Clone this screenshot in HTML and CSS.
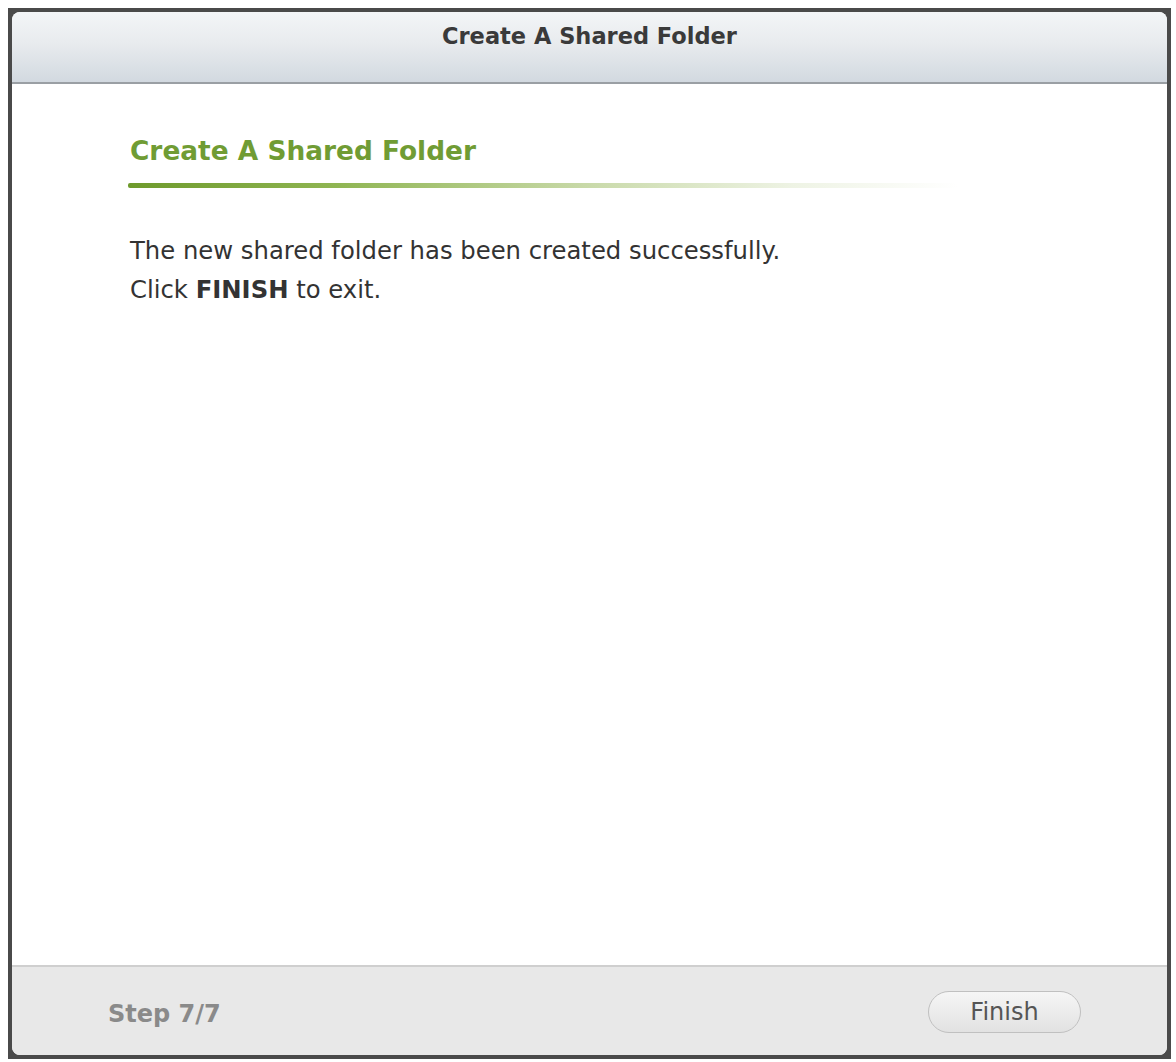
FILE: index.html
```html
<!DOCTYPE html>
<html>
<head>
<meta charset="utf-8">
<link rel="stylesheet" href="styles.css">
</head>
<body>
<div class="window">
  <div class="inner">
    <div class="titlebar">Create A Shared Folder</div>
    <div class="content">
      <h1 class="heading">Create A Shared Folder</h1>
      <div class="rule"></div>
      <p class="msg">The new shared folder has been created successfully.</p>
      <p class="msg">Click <b>FINISH</b> to exit.</p>
    </div>
    <div class="footer">
      <span class="step">Step 7/7</span>
      <button class="btn">Finish</button>
    </div>
  </div>
</div>
</body>
</html>
```
FILE: styles.css
```css
html, body {
  margin: 0;
  padding: 0;
  background: #ffffff;
}
body {
  padding: 8px 0 0 8px;
}
.window {
  width: 1163px;
  height: 1051px;
  box-sizing: border-box;
  border: 4px solid #4a4a4a;
  background: #4a4a4a;
}
.inner {
  height: 100%;
  display: flex;
  flex-direction: column;
  background: #fff;
  border-radius: 8px;
  overflow: hidden;
}
.titlebar {
  height: 72px;
  box-sizing: border-box;
  flex: none;
  border-bottom: 2px solid #9a9fa4;
  background: linear-gradient(#f3f5f7 0%, #e8ebee 45%, #d2d9e0 100%);
  display: flex;
  align-items: center;
  justify-content: center;
  padding-bottom: 22px;
  font-family: "DejaVu Sans", Verdana, sans-serif;
  font-weight: bold;
  font-size: 22.5px;
  color: #3a3a3a;
}
.content {
  flex: 1;
  padding: 50px 0 0 118px;
}
.heading {
  margin: 0;
  font-family: "DejaVu Sans", Verdana, sans-serif;
  font-weight: bold;
  font-size: 26.4px;
  color: #709c34;
  line-height: 34px;
}
.rule {
  margin: 15px 0 0 -2px;
  width: 830px;
  height: 5px;
  background: linear-gradient(90deg, #6e9a2c 0%, #8fb552 25%, #c8d9a8 55%, #eef3e4 80%, rgba(255,255,255,0) 100%);
  border-radius: 2px;
}
.msg {
  margin: 0;
  font-family: "DejaVu Sans", Verdana, sans-serif;
  font-size: 24.3px;
  color: #333;
  line-height: 39px;
}
.rule + .msg {
  margin-top: 43px;
}
.footer {
  height: 88px;
  flex: none;
  border-top: 2px solid #cfcfcf;
  background: #e8e8e8;
  display: flex;
  align-items: center;
  justify-content: space-between;
  padding: 0 86px 0 96px;
}
.step {
  font-family: "DejaVu Sans", Verdana, sans-serif;
  font-weight: bold;
  font-size: 24px;
  color: #8a8a8a;
  margin-top: 6px;
}
.btn {
  width: 153px;
  height: 42px;
  border-radius: 21px;
  border: 1px solid #c0c0c0;
  background: linear-gradient(#f6f6f6, #e2e2e2);
  font-family: "DejaVu Sans", Verdana, sans-serif;
  font-size: 24px;
  color: #555;
  margin-top: 2px;
  padding: 0;
}
```
